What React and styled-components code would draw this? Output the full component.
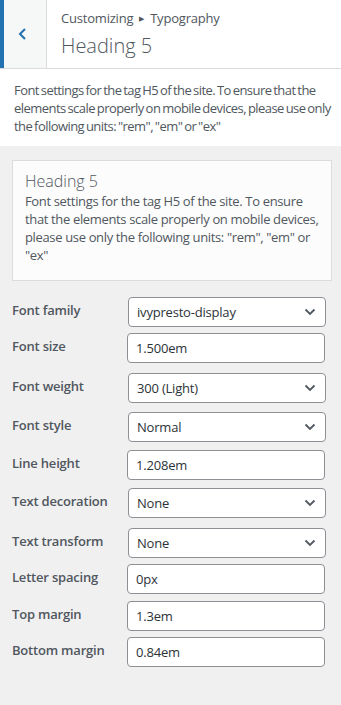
import React from 'react';
import styled, {createGlobalStyle} from 'styled-components';

const Global = createGlobalStyle`
  html, body {
    margin: 0;
    padding: 0;
    background: #f0f0f1;
  }
  body {
    font-family: "Open Sans", "Noto Sans", sans-serif;
    color: #50575e;
  }
`;

const Panel = styled.div`
  width: 341px;
  min-height: 705px;
  background: #f0f0f1;
`;

const Header = styled.div`
  display: flex;
  height: 68px;
  background: #fff;
  border-bottom: 1px solid #dcdcde;
`;

const BackButton = styled.button`
  width: 47px;
  height: 100%;
  padding: 0;
  margin: 0;
  border: none;
  border-left: 4px solid #2271b1;
  border-right: 1px solid #dcdcde;
  background: #f6f7f7;
  display: flex;
  align-items: center;
  justify-content: center;
  padding-right: 4px;
  cursor: pointer;
`;

const Titles = styled.div`
  display: flex;
  flex-direction: column;
  padding: 8px 0 0 14px;
`;

const Crumbs = styled.span`
  font-size: 13px;
  line-height: 20px;
  color: #50575e;
  letter-spacing: -0.2px;
`;

const Arrow = styled.span`
  font-size: 7px;
  margin: 0 6px;
  vertical-align: 2px;
`;

const Title = styled.h3`
  margin: 4px 0 0;
  font-size: 20px;
  line-height: 26px;
  font-weight: 300;
  color: #50575e;
`;

const Intro = styled.p`
  margin: 0;
  padding: 12px 0 11px 14px;
  background: #fff;
  font-size: 13px;
  line-height: 18px;
  letter-spacing: -0.55px;
  word-spacing: -1px;
  color: #50575e;
`;

const Body = styled.div`
  padding: 14px 9px 30px 12px;
`;

const InfoCard = styled.div`
  background: #fcfcfc;
  border: 1px solid #dcdcde;
  padding: 9px 12px 16px;
  margin-bottom: 16px;
`;

const CardTitle = styled.h4`
  margin: 0;
  font-size: 16px;
  line-height: 22px;
  font-weight: 300;
  color: #50575e;
`;

const CardText = styled.p`
  margin: 0;
  font-size: 13px;
  line-height: 18px;
  letter-spacing: -0.35px;
  color: #50575e;
`;

const Row = styled.div`
  display: flex;
  align-items: flex-start;
  margin-bottom: ${p => p.space}px;
`;

const Label = styled.label`
  width: 115px;
  flex-shrink: 0;
  padding-top: 3px;
  font-size: 13px;
  line-height: 20px;
  font-weight: 600;
  color: #50575e;
  letter-spacing: -0.2px;
`;

const Field = styled.div`
  position: relative;
  width: 198px;
  height: 30px;
  margin-left: ${p => p.select ? 1 : 0}px;
  box-sizing: border-box;
  border: 1px solid #8c8f94;
  border-radius: 4px;
  background: #fff;
  display: flex;
  align-items: center;
  padding: 0 8px;
  font-size: 13px;
  color: #2c3338;
  letter-spacing: -0.2px;
`;

const Caret = styled.svg`
  position: absolute;
  right: 9px;
  top: 10px;
`;

const fields = [
  {label: 'Font family', value: 'ivypresto-display', select: true, space: 6},
  {label: 'Font size', value: '1.500em', space: 10},
  {label: 'Font weight', value: '300 (Light)', select: true, space: 9},
  {label: 'Font style', value: 'Normal', select: true, space: 8},
  {label: 'Line height', value: '1.208em', space: 8},
  {label: 'Text decoration', value: 'None', select: true, space: 10},
  {label: 'Text transform', value: 'None', select: true, space: 6},
  {label: 'Letter spacing', value: '0px', space: 7},
  {label: 'Top margin', value: '1.3em', space: 6},
  {label: 'Bottom margin', value: '0.84em', space: 0},
];

const desc = 'Font settings for the tag H5 of the site. To ensure that the elements scale properly on mobile devices, please use only the following units: "rem", "em" or "ex"';

export default () => (
  <Panel>
    <Global/>
    <Header>
      <BackButton aria-label="Back">
        <svg width="12" height="14" viewBox="0 0 12 14">
          <path d="M8 2 L3 7 L8 12" fill="none" stroke="#2271b1" strokeWidth="2"/>
        </svg>
      </BackButton>
      <Titles>
        <Crumbs>Customizing<Arrow>▶</Arrow>Typography</Crumbs>
        <Title>Heading 5</Title>
      </Titles>
    </Header>
    <Intro>{desc}</Intro>
    <Body>
      <InfoCard>
        <CardTitle>Heading 5</CardTitle>
        <CardText>{desc}</CardText>
      </InfoCard>
      {fields.map(f => (
        <Row key={f.label} space={f.space}>
          <Label>{f.label}</Label>
          <Field select={f.select}>
            {f.value}
            {f.select && (
              <Caret width="12" height="8" viewBox="0 0 12 8">
                <path d="M1.5 1.5 L6 6 L10.5 1.5" fill="none" stroke="#50575e" strokeWidth="1.8"/>
              </Caret>
            )}
          </Field>
        </Row>
      ))}
    </Body>
  </Panel>
);
